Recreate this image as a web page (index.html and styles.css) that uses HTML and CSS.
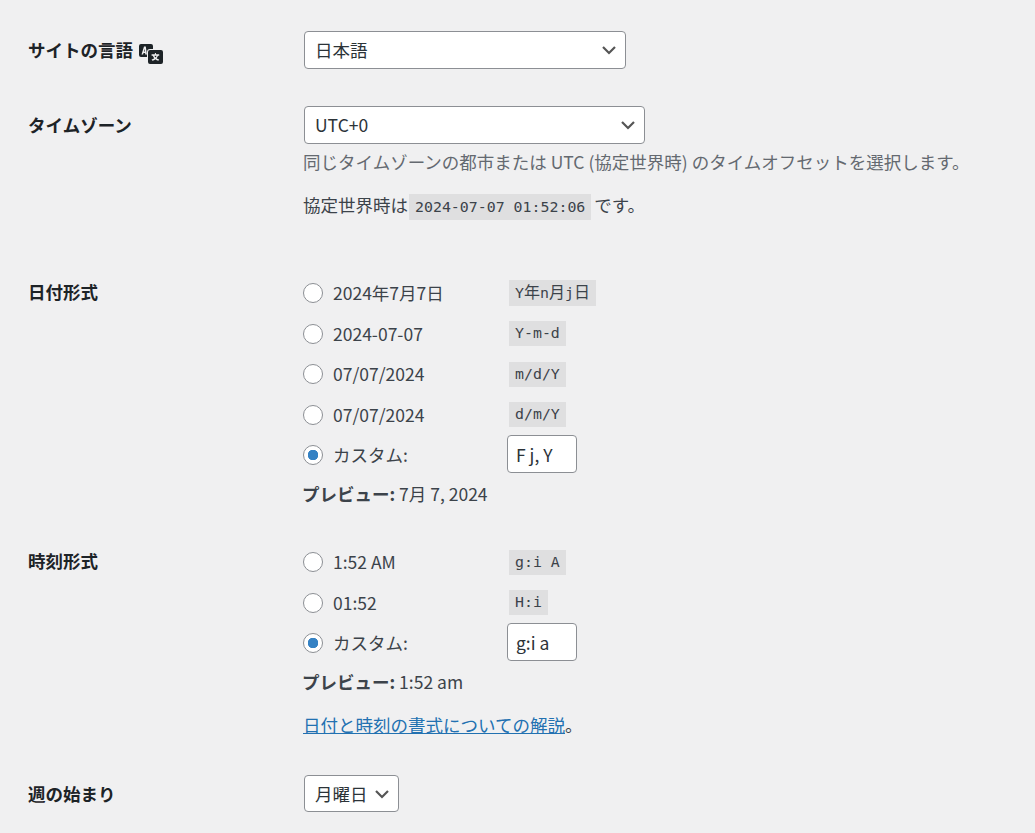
FILE: index.html
```html
<!DOCTYPE html>
<html lang="ja">

<head>
  <meta charset="UTF-8">
  <title>一般設定</title>
  <link rel="stylesheet" href="styles.css">
</head>

<body>
  <form class="settings">
    <!-- Language -->
    <div class="row row-language">
      <div class="row-label">
        <label for="lang">サイトの言語</label>
        <svg class="translate-icon" width="24" height="20" viewBox="0 0 24 20" aria-hidden="true">
          <path fill="#1d2327" fill-rule="evenodd" d="M2 0h10q2 0 2 2v3h-3q-3 0-3 3v5H2q-2 0-2-2V2q0-2 2-2zM5 2.5 2.5 10.5h1.6l.4-1.6h1.6l.2 1.6h1.6L6.8 2.5zM5 7.5l.7-2.7.3 2.7z"/>
          <path fill="#1d2327" fill-rule="evenodd" d="M11 6h11q2 0 2 2v10q0 2-2 2H11q-2 0-2-2V8q0-2 2-2zM15.9 9v1.3h-3.3v1.5h1.2q.6 1.5 1.4 2.4-1 .8-2.6 1.2l.8 1.4q1.8-.5 3-1.5 1.2 1 3 1.5l.8-1.4q-1.6-.4-2.6-1.2.8-.9 1.4-2.4h1.2v-1.5h-3.3V9zM15.4 11.8h2.2q-.4 1-1.1 1.6-.7-.6-1.1-1.6z"/>
        </svg>
      </div>
      <div class="row-field">
        <select id="lang" class="select select-lang">
          <option>日本語</option>
        </select>
      </div>
    </div>

    <!-- Timezone -->
    <div class="row row-timezone">
      <div class="row-label"><label for="tz">タイムゾーン</label></div>
      <div class="row-field">
        <select id="tz" class="select select-tz">
          <option>UTC+0</option>
        </select>
        <p class="description">同じタイムゾーンの都市または UTC (協定世界時) のタイムオフセットを選択します。</p>
        <p class="utc-now">協定世界時は<code class="utc-time">2024-07-07 01:52:06</code>です。</p>
      </div>
    </div>

    <!-- Date format -->
    <div class="row row-date">
      <div class="row-label"><label>日付形式</label></div>
      <div class="row-field">
        <div class="choices">
          <label class="choice"><input type="radio" name="date_format"><span class="choice-text">2024年7月7日</span><code>Y<span class="wide">年</span>n<span class="wide">月</span>j<span class="wide">日</span></code></label>
          <label class="choice"><input type="radio" name="date_format"><span class="choice-text">2024-07-07</span><code>Y-m-d</code></label>
          <label class="choice"><input type="radio" name="date_format"><span class="choice-text">07/07/2024</span><code>m/d/Y</code></label>
          <label class="choice"><input type="radio" name="date_format"><span class="choice-text">07/07/2024</span><code>d/m/Y</code></label>
          <label class="choice"><input type="radio" name="date_format" checked><span class="choice-text">カスタム:</span><input class="custom-format" type="text" value="F j, Y"></label>
        </div>
        <p class="preview"><strong>プレビュー:</strong> 7月 7, 2024</p>
      </div>
    </div>

    <!-- Time format -->
    <div class="row row-time">
      <div class="row-label"><label>時刻形式</label></div>
      <div class="row-field">
        <div class="choices">
          <label class="choice"><input type="radio" name="time_format"><span class="choice-text">1:52 AM</span><code>g:i A</code></label>
          <label class="choice"><input type="radio" name="time_format"><span class="choice-text">01:52</span><code>H:i</code></label>
          <label class="choice"><input type="radio" name="time_format" checked><span class="choice-text">カスタム:</span><input class="custom-format" type="text" value="g:i a"></label>
        </div>
        <p class="preview preview-time"><strong>プレビュー:</strong> 1:52 am</p>
        <p class="doc-link"><a href="#">日付と時刻の書式についての解説</a>。</p>
      </div>
    </div>

    <!-- Week start -->
    <div class="row row-week">
      <div class="row-label"><label for="week">週の始まり</label></div>
      <div class="row-field">
        <select id="week" class="select select-week">
          <option>月曜日</option>
        </select>
      </div>
    </div>
  </form>
</body>

</html>
```

FILE: styles.css
```css
html {
  height: 100%;
  overflow: hidden;
}

body {
  margin: 0;
  height: 100%;
  background: #f0f0f1;
  color: #3c434a;
  font-family: "Noto Sans CJK JP", "Open Sans", sans-serif;
  font-size: 17.5px;
  line-height: 24px;
}

.settings {
  padding: 31px 0 0 28px;
}

.row {
  display: grid;
  grid-template-columns: 275px 1fr;
}

.row-language {
  height: 75px;
}

.row-timezone {
  height: 175px;
}

.row-date {
  height: 257px;
  padding-top: 12px;
}

.row-time {
  height: 213px;
  padding-top: 12px;
}

.row-label {
  display: flex;
  align-items: center;
  height: 38px;
  color: #1d2327;
  font-weight: 700;
}

.translate-icon {
  margin: 8px 0 0 6px;
}

p {
  margin: 0;
}

.select {
  display: block;
  height: 38px;
  margin: 0 0 0 1px;
  padding: 0 24px 0 10px;
  border: 1px solid #8c8f94;
  border-radius: 4px;
  background: #fff url("data:image/svg+xml,%3Csvg xmlns='http://www.w3.org/2000/svg' width='16' height='16' viewBox='0 0 16 16'%3E%3Cpath d='M2 5l6 6 6-6' fill='none' stroke='%23555' stroke-width='2.2'/%3E%3C/svg%3E") no-repeat right 8px center;
  color: #2c3338;
  font: inherit;
  appearance: none;
}

.select-lang {
  width: 322px;
}

.select-tz {
  width: 341px;
}

.select-week {
  width: 95px;
  height: 37px;
}

.description {
  margin-top: 6px;
  color: #646970;
}

.utc-now {
  margin-top: 19px;
}

code {
  padding: 4px 6px;
  background: rgba(0, 0, 0, .07);
  color: #3c434a;
  font-family: "DejaVu Sans Mono", "Noto Sans CJK JP", monospace;
  font-size: 14.9px;
  line-height: 17px;
}

.utc-time {
  margin: 0 3px 0 1px;
}

.wide {
  font-size: 16px;
}

.row-date .row-label,
.row-time .row-label {
  height: 24px;
  margin-top: -13px;
}

.row-date .row-field,
.row-time .row-field {
  margin-top: -12px;
}

.choices {
  display: flex;
  flex-direction: column;
  gap: 16.5px;
}

.choice {
  display: flex;
  align-items: center;
  height: 24px;
}

.choice input[type="radio"] {
  width: 20px;
  height: 20px;
  margin: 0 10px 0 0;
  appearance: none;
  border: 1px solid #8c8f94;
  border-radius: 50%;
  background: #fff;
}

.choice input[type="radio"]:checked {
  background: radial-gradient(circle, #3582c4 0 5px, #fff 5.5px);
}

.choice-text {
  width: 176px;
}

.custom-format {
  box-sizing: border-box;
  width: 70px;
  height: 38px;
  margin: -2px 0 0 -2px;
  padding: 0 8px;
  border: 1px solid #8c8f94;
  border-radius: 4px;
  background: #fff;
  color: #2c3338;
  font: inherit;
}

.preview {
  margin: 15px 0 0 -1px;
}

.preview-time {
  margin-top: 15px;
}

.preview strong {
  color: #3c434a;
}

.doc-link {
  margin-top: 19px;
}

.doc-link a {
  color: #2271b1;
}
```
